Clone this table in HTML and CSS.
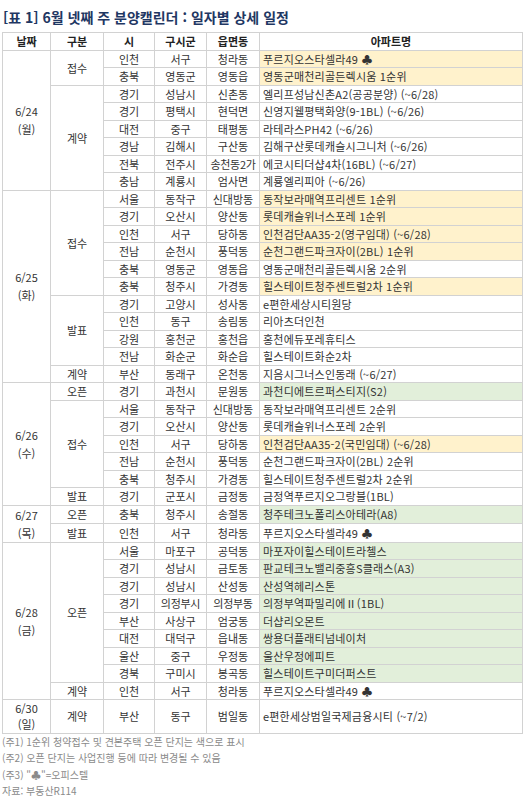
FILE: index.html
```html
<!DOCTYPE html>
<html lang="ko">
<head>
<meta charset="utf-8">
<link rel="stylesheet" href="styles.css">
</head>
<body>
<div class="title">[표 1] 6월 넷째 주 분양캘린더 : 일자별 상세 일정</div>
<table class="cal">
<colgroup>
<col class="c-date"><col class="c-type"><col class="c-si"><col class="c-gu"><col class="c-dong"><col class="c-apt">
</colgroup>
<thead>
<tr><th>날짜</th><th>구분</th><th>시</th><th>구시군</th><th>읍면동</th><th>아파트명</th></tr>
</thead>
<tbody>
<tr><td rowspan="8">6/24<br>(월)</td><td rowspan="2">접수</td><td>인천</td><td>서구</td><td>청라동</td><td class="apt y">푸르지오스타셀라49 ♣</td></tr>
<tr><td>충북</td><td>영동군</td><td>영동읍</td><td class="apt y">영동군매천리골든렉시움 1순위</td></tr>
<tr><td rowspan="6">계약</td><td>경기</td><td>성남시</td><td>신촌동</td><td class="apt">엘리프성남신촌A2(공공분양) (~6/28)</td></tr>
<tr><td>경기</td><td>평택시</td><td>현덕면</td><td class="apt">신영지웰평택화양(9-1BL) (~6/26)</td></tr>
<tr><td>대전</td><td>중구</td><td>태평동</td><td class="apt">라테라스PH42 (~6/26)</td></tr>
<tr><td>경남</td><td>김해시</td><td>구산동</td><td class="apt">김해구산롯데캐슬시그니처 (~6/26)</td></tr>
<tr><td>전북</td><td>전주시</td><td class="nw">송천동2가</td><td class="apt">에코시티더샵4차(16BL) (~6/27)</td></tr>
<tr><td>충남</td><td>계룡시</td><td>엄사면</td><td class="apt">계룡엘리피아 (~6/26)</td></tr>

<tr><td rowspan="11">6/25<br>(화)</td><td rowspan="6">접수</td><td>서울</td><td>동작구</td><td>신대방동</td><td class="apt y">동작보라매역프리센트 1순위</td></tr>
<tr><td>경기</td><td>오산시</td><td>양산동</td><td class="apt y">롯데캐슬위너스포레 1순위</td></tr>
<tr><td>인천</td><td>서구</td><td>당하동</td><td class="apt y">인천검단AA35-2(영구임대) (~6/28)</td></tr>
<tr><td>전남</td><td>순천시</td><td>풍덕동</td><td class="apt y">순천그랜드파크자이(2BL) 1순위</td></tr>
<tr><td>충북</td><td>영동군</td><td>영동읍</td><td class="apt">영동군매천리골든렉시움 2순위</td></tr>
<tr><td>충북</td><td>청주시</td><td>가경동</td><td class="apt y">힐스테이트청주센트럴2차 1순위</td></tr>
<tr><td rowspan="4">발표</td><td>경기</td><td>고양시</td><td>성사동</td><td class="apt">e편한세상시티원당</td></tr>
<tr><td>인천</td><td>동구</td><td>송림동</td><td class="apt">리아츠더인천</td></tr>
<tr><td>강원</td><td>홍천군</td><td>홍천읍</td><td class="apt">홍천에듀포레휴티스</td></tr>
<tr><td>전남</td><td>화순군</td><td>화순읍</td><td class="apt">힐스테이트화순2차</td></tr>
<tr><td>계약</td><td>부산</td><td>동래구</td><td>온천동</td><td class="apt">지음시그너스인동래 (~6/27)</td></tr>

<tr><td rowspan="7">6/26<br>(수)</td><td>오픈</td><td>경기</td><td>과천시</td><td>문원동</td><td class="apt g">과천디에트르퍼스티지(S2)</td></tr>
<tr><td rowspan="5">접수</td><td>서울</td><td>동작구</td><td>신대방동</td><td class="apt">동작보라매역프리센트 2순위</td></tr>
<tr><td>경기</td><td>오산시</td><td>양산동</td><td class="apt">롯데캐슬위너스포레 2순위</td></tr>
<tr><td>인천</td><td>서구</td><td>당하동</td><td class="apt y">인천검단AA35-2(국민임대) (~6/28)</td></tr>
<tr><td>전남</td><td>순천시</td><td>풍덕동</td><td class="apt">순천그랜드파크자이(2BL) 2순위</td></tr>
<tr><td>충북</td><td>청주시</td><td>가경동</td><td class="apt">힐스테이트청주센트럴2차 2순위</td></tr>
<tr><td>발표</td><td>경기</td><td>군포시</td><td>금정동</td><td class="apt">금정역푸르지오그랑블(1BL)</td></tr>

<tr><td rowspan="2">6/27<br>(목)</td><td>오픈</td><td>충북</td><td>청주시</td><td>송절동</td><td class="apt g">청주테크노폴리스아테라(A8)</td></tr>
<tr><td>발표</td><td>인천</td><td>서구</td><td>청라동</td><td class="apt">푸르지오스타셀라49 ♣</td></tr>

<tr><td rowspan="9">6/28<br>(금)</td><td rowspan="8">오픈</td><td>서울</td><td>마포구</td><td>공덕동</td><td class="apt g">마포자이힐스테이트라첼스</td></tr>
<tr><td>경기</td><td>성남시</td><td>금토동</td><td class="apt g">판교테크노밸리중흥S클래스(A3)</td></tr>
<tr><td>경기</td><td>성남시</td><td>산성동</td><td class="apt g">산성역헤리스톤</td></tr>
<tr><td>경기</td><td class="nw">의정부시</td><td class="nw">의정부동</td><td class="apt g">의정부역파밀리에Ⅱ(1BL)</td></tr>
<tr><td>부산</td><td>사상구</td><td>엄궁동</td><td class="apt g">더샵리오몬트</td></tr>
<tr><td>대전</td><td>대덕구</td><td>읍내동</td><td class="apt g">쌍용더플래티넘네이처</td></tr>
<tr><td>울산</td><td>중구</td><td>우정동</td><td class="apt g">울산우정에피트</td></tr>
<tr><td>경북</td><td>구미시</td><td>봉곡동</td><td class="apt g">힐스테이트구미더퍼스트</td></tr>
<tr><td>계약</td><td>인천</td><td>서구</td><td>청라동</td><td class="apt">푸르지오스타셀라49 ♣</td></tr>

<tr class="tall"><td>6/30<br>(일)</td><td>계약</td><td>부산</td><td>동구</td><td>범일동</td><td class="apt">e편한세상범일국제금융시티 (~7/2)</td></tr>
</tbody>
</table>
<div class="notes">
<p>(주1) 1순위 청약접수 및 견본주택 오픈 단지는 색으로 표시</p>
<p>(주2) 오픈 단지는 사업진행 등에 따라 변경될 수 있음</p>
<p>(주3) "♣"=오피스텔</p>
<p>자료: 부동산R114</p>
</div>
</body>
</html>
```

FILE: styles.css
```css
html, body {
  margin: 0;
  padding: 0;
  background: #ffffff;
}
body {
  padding-left: 2px;
  font-family: "Noto Sans CJK KR", "Noto Sans", sans-serif;
  color: #333333;
}
.title {
  height: 32px;
  box-sizing: border-box;
  padding: 8px 0 0 1px;
  font-size: 14px;
  font-weight: bold;
  line-height: 18px;
  color: #1f3763;
}
.cal {
  border-collapse: collapse;
  table-layout: fixed;
  width: 520px;
  font-size: 11px;
}
.c-date { width: 48px; }
.c-type { width: 53px; }
.c-si { width: 51px; }
.c-gu { width: 52px; }
.c-dong { width: 53px; }
.c-apt { width: 263px; }
.cal tr {
  height: 17.5px;
}
.cal th, .cal td {
  border: 1px solid #d2d2d2;
  padding: 0;
  line-height: 14px;
  text-align: center;
  vertical-align: middle;
  white-space: nowrap;
  overflow: hidden;
}
.cal td[rowspan] {
  line-height: 18px;
}
.cal th {
  font-weight: bold;
  color: #222222;
}
.cal td.nw {
  overflow: visible;
  letter-spacing: -0.3px;
}
.cal td.apt {
  text-align: left;
  padding-left: 3px;
  letter-spacing: 0.2px;
}
.cal td.y { background: #fff2cc; }
.cal td.g { background: #e2efda; }
.cal tr.tall {
  height: 33.5px;
}
.cal tr.tall td:first-child {
  line-height: 16px;
}
.notes {
  font-size: 10px;
  color: #8a8a8a;
}
.notes p {
  margin: 0;
  line-height: 16.5px;
}
```
